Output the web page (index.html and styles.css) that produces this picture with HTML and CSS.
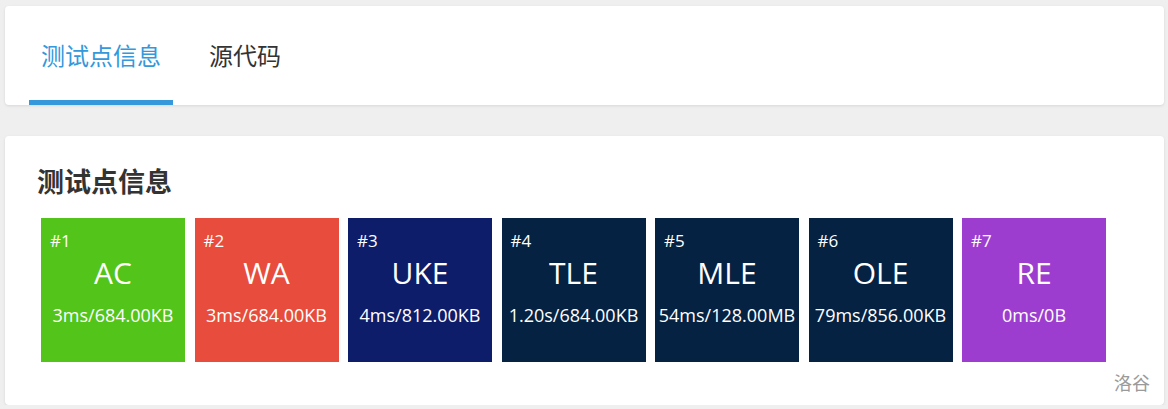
FILE: index.html
```html
<!DOCTYPE html>
<html lang="zh-CN">
<head>
<meta charset="utf-8">
<title>测试点信息</title>
<link rel="stylesheet" href="styles.css">
</head>
<body>
<div class="page">
  <div class="card tabs-card">
    <div class="tab active">测试点信息</div>
    <div class="tab">源代码</div>
  </div>
  <div class="card cases-card">
    <h3 class="title">测试点信息</h3>
    <div class="tiles">
      <div class="tile ac"><div class="num">#1</div><div class="status">AC</div><div class="info">3ms/684.00KB</div></div>
      <div class="tile wa"><div class="num">#2</div><div class="status">WA</div><div class="info">3ms/684.00KB</div></div>
      <div class="tile uke"><div class="num">#3</div><div class="status">UKE</div><div class="info">4ms/812.00KB</div></div>
      <div class="tile dark"><div class="num">#4</div><div class="status">TLE</div><div class="info">1.20s/684.00KB</div></div>
      <div class="tile dark"><div class="num">#5</div><div class="status">MLE</div><div class="info">54ms/128.00MB</div></div>
      <div class="tile dark"><div class="num">#6</div><div class="status">OLE</div><div class="info">79ms/856.00KB</div></div>
      <div class="tile re"><div class="num">#7</div><div class="status">RE</div><div class="info">0ms/0B</div></div>
    </div>
    <div class="footer">洛谷</div>
  </div>
</div>
</body>
</html>
```
FILE: styles.css
```css
html, body {
  margin: 0;
  padding: 0;
  background: #efefef;
}
body {
  font-family: "Open Sans", "Noto Sans CJK SC", sans-serif;
  color: #333;
}
.page {
  padding: 6px 4px 0 5px;
}
.card {
  background: #fff;
  border-radius: 4px;
  box-shadow: 0 1px 3px rgba(0, 0, 0, 0.1);
}
.tabs-card {
  display: flex;
  gap: 24px;
  padding-left: 24px;
  height: 99px;
  box-sizing: border-box;
}
.tab {
  display: flex;
  align-items: center;
  padding: 2px 12px 0;
  font-size: 24px;
  color: #333;
  border-bottom: 5px solid transparent;
  box-sizing: border-box;
}
.tab.active {
  color: #3498db;
  border-bottom-color: #3498db;
}
.cases-card {
  margin-top: 31px;
  padding: 26px 14px 10px 32px;
}
.title {
  margin: 0 0 16px;
  font-size: 27px;
  line-height: 40px;
  font-weight: 700;
  color: #333;
}
.tiles {
  display: flex;
  flex-wrap: wrap;
  gap: 9.5px;
  padding-left: 4px;
}
.tile {
  width: 144px;
  height: 144px;
  box-sizing: border-box;
  padding: 11px 9px 0;
  color: #fff;
}
.num {
  font-size: 17px;
  line-height: 23px;
}
.status {
  text-align: center;
  font-size: 30px;
  line-height: 41px;
}
.info {
  margin-top: 10px;
  text-align: center;
  font-size: 18px;
  line-height: 24px;
  white-space: nowrap;
  margin-left: -9px;
  margin-right: -9px;
}
.ac { background: #52c41a; }
.wa { background: #e74c3c; }
.uke { background: #0e1d69; }
.dark { background: #052242; }
.re { background: #9d3dcf; }
.footer {
  margin-top: 9px;
  text-align: right;
  font-size: 18px;
  line-height: 24px;
  color: #9a9a9a;
}
```
